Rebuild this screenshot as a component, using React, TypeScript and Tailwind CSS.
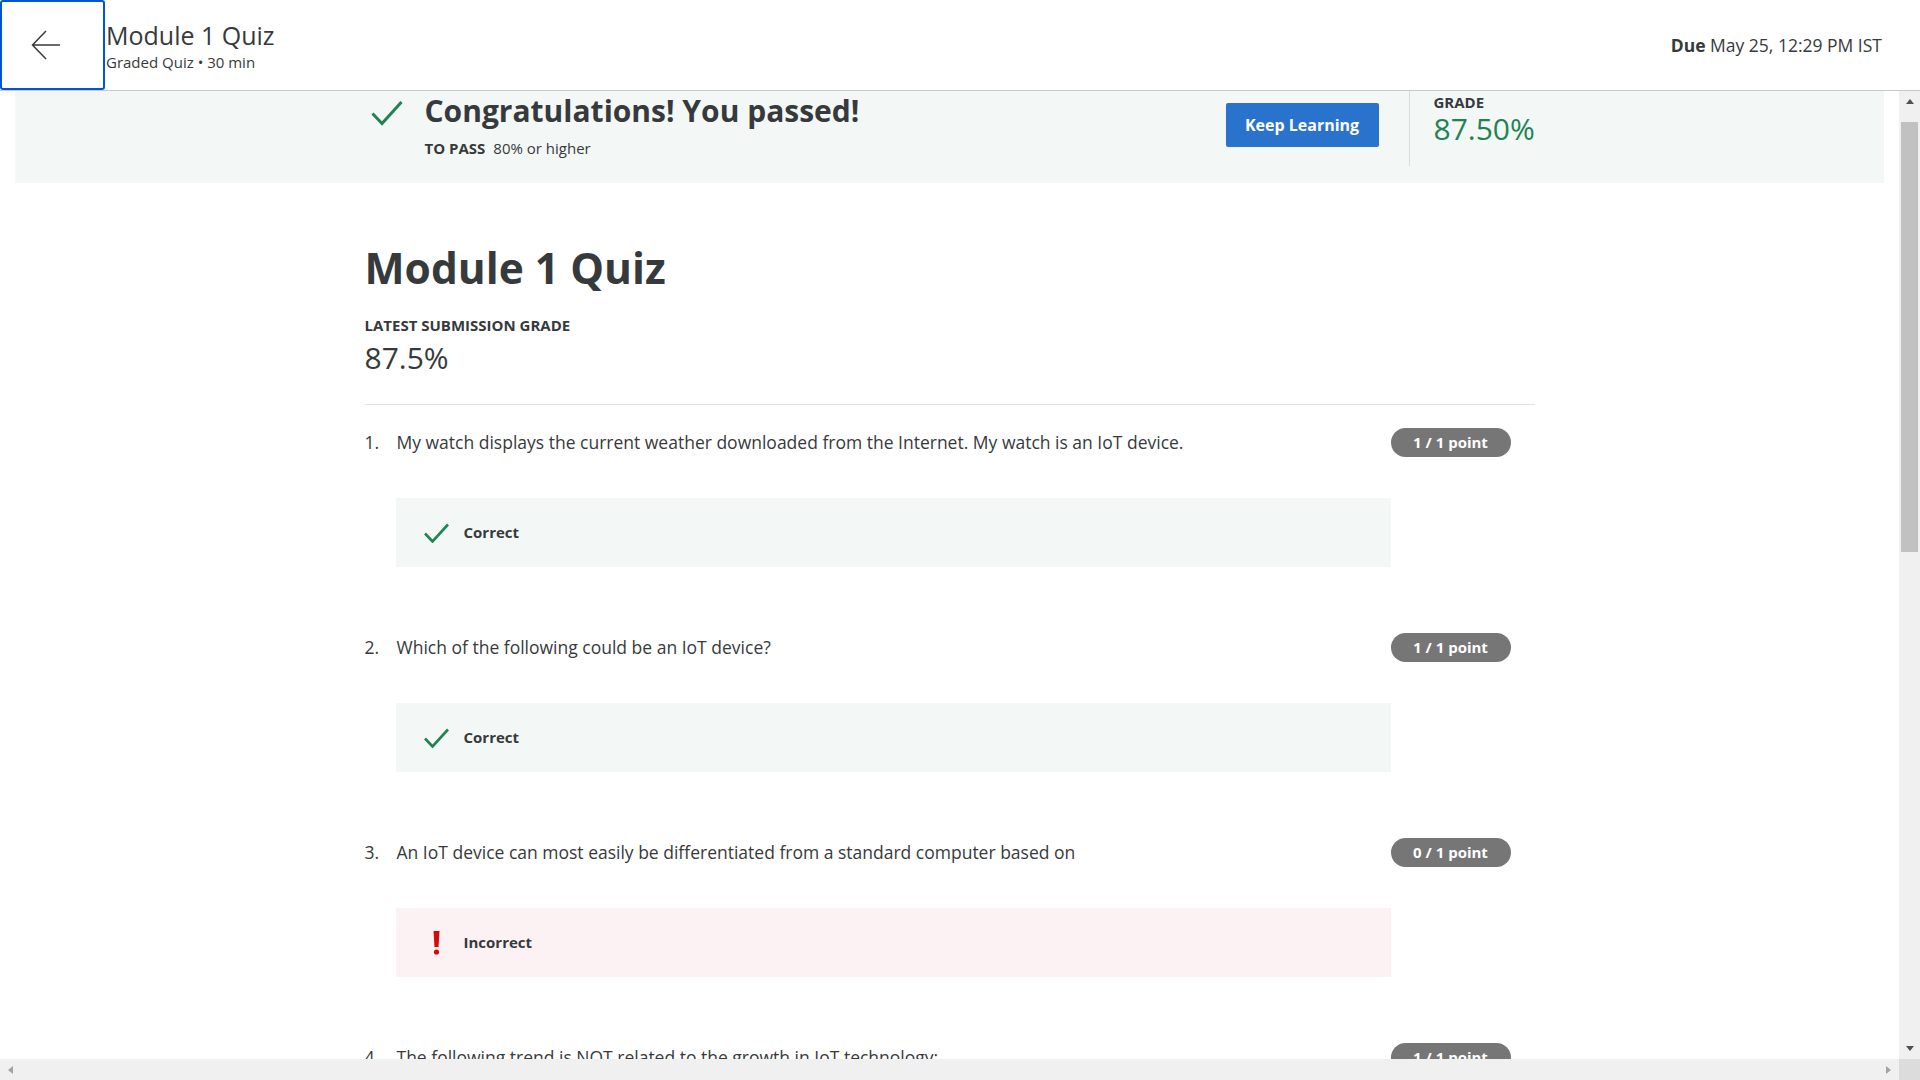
import { type ReactNode } from 'react';

interface Question {
    num: number;
    text: string;
    score: string;
    correct: boolean;
}

const questions: Question[] = [
    { num: 1, text: 'My watch displays the current weather downloaded from the Internet. My watch is an IoT device.', score: '1 / 1 point', correct: true },
    { num: 2, text: 'Which of the following could be an IoT device?', score: '1 / 1 point', correct: true },
    { num: 3, text: 'An IoT device can most easily be differentiated from a standard computer based on', score: '0 / 1 point', correct: false },
    { num: 4, text: 'The following trend is NOT related to the growth in IoT technology:', score: '1 / 1 point', correct: true },
    { num: 5, text: 'Which of the following is an example of an embedded system?', score: '1 / 1 point', correct: true },
    { num: 6, text: 'The interface of an IoT device with the physical world is usually through', score: '1 / 1 point', correct: true },
    { num: 7, text: 'Which of the following is a common constraint of IoT devices?', score: '1 / 1 point', correct: true },
    { num: 8, text: 'A network of IoT devices can be used to', score: '1 / 1 point', correct: true },
];

function CheckIcon({ className }: { className?: string }) {
    return (
        <svg className={className} viewBox="0 0 32 26" fill="none" stroke="#1f8354" strokeWidth={3}>
            <path d="M1.5 13.5L11 23.5L30.5 2" />
        </svg>
    );
}

function ResultBox({ correct }: { correct: boolean }) {
    return (
        <div className={`ml-[31px] mt-[41px] h-[69px] flex items-center pl-[28px] ${correct ? 'bg-[#f3f8f6]' : 'bg-[#fdf2f3]'}`}>
            <div className="w-[25px] flex justify-center">
                {correct ? (
                    <svg className="w-[25px] h-[20px]" viewBox="0 0 25 20" fill="none" stroke="#1f8354" strokeWidth={2.6}>
                        <path d="M1 10.5L8.5 18.5L24 1.5" />
                    </svg>
                ) : (
                    <svg className="w-[7px] h-[24px]" viewBox="0 0 7 24" fill="#d30a0a">
                        <path d="M0.5 0h6l-1 16h-4z" />
                        <circle cx="3.5" cy="21" r="2.6" />
                    </svg>
                )}
            </div>
            <span className="ml-[15px] text-[15px] font-bold text-[#373a3c]">{correct ? 'Correct' : 'Incorrect'}</span>
        </div>
    );
}

function QuestionBlock({ q }: { q: Question }) {
    return (
        <div className="flex mb-[65px]">
            <div className="flex-1 flex flex-col">
                <div className="flex h-[30px] items-center text-[17.5px] text-[#373a3c]">
                    <span className="w-[32px]">{q.num}.</span>
                    <span>{q.text}</span>
                </div>
                <ResultBox correct={q.correct} />
            </div>
            <div className="w-[144px] pt-[1px]">
                <span className="inline-flex items-center justify-center w-[120px] h-[29px] rounded-full bg-[#767676] text-white text-[15px] font-bold">
                    {q.score}
                </span>
            </div>
        </div>
    );
}

function Column({ children }: { children: ReactNode }) {
    return <div className="w-[1170px] mx-auto">{children}</div>;
}

// little triangles for the scrollbar buttons
function Arrow({ dir, color }: { dir: 'up' | 'down' | 'left' | 'right'; color: string }) {
    const d = {
        up: 'M0 5L4 0L8 5Z',
        down: 'M0 0L8 0L4 5Z',
        left: 'M5 0L5 8L0 4Z',
        right: 'M0 0L5 4L0 8Z',
    }[dir];
    const vertical = dir === 'up' || dir === 'down';
    return (
        <svg className={vertical ? 'w-[8px] h-[5px]' : 'w-[5px] h-[8px]'} viewBox={vertical ? '0 0 8 5' : '0 0 5 8'} fill={color}>
            <path d={d} />
        </svg>
    );
}

export default function App() {
    return (
        <div className="h-screen w-screen flex flex-col bg-white font-['Open_Sans',sans-serif] text-[#373a3c]">
            {/* Header */}
            <header className="h-[91px] shrink-0 border-b border-[#c8c8c8] flex items-center">
                <button className="w-[105px] h-[90px] border-2 border-[#0056d2] rounded-[3px] flex items-center pl-[29px]">
                    <svg className="w-[30px] h-[30px]" viewBox="0 0 30 30" fill="none" stroke="#373a3c" strokeWidth={1.5}>
                        <path d="M29 15H1.5M15 1L1.5 15L15 29" />
                    </svg>
                </button>
                <div className="ml-[1px] flex flex-col">
                    <h1 className="text-[25px] leading-[30px]">Module 1 Quiz</h1>
                    <p className="mt-[3px] text-[15px] leading-[18px]">Graded Quiz • 30 min</p>
                </div>
                <div className="ml-auto mr-[38px] text-[17.5px]">
                    <span className="font-bold">Due</span> May 25, 12:29 PM IST
                </div>
            </header>

            <div className="flex-1 min-h-0 grid grid-cols-[1fr_21px] grid-rows-[1fr_21px]">
                <main className="overflow-hidden">
                    {/* Result banner */}
                    <div className="mx-[15px] h-[92px] bg-[#f3f8f6]">
                        <Column>
                            <div className="flex items-start">
                                <div className="flex flex-col">
                                    <div className="flex items-center mt-[2px] h-[36px]">
                                        <CheckIcon className="w-[32px] h-[26px] ml-[6px] mt-[4px]" />
                                        <h2 className="ml-[22px] text-[30px] font-bold leading-[36px]">Congratulations! You passed!</h2>
                                    </div>
                                    <div className="ml-[60px] mt-[9px] text-[15px] leading-[20px]">
                                        <span className="font-bold">TO PASS</span>
                                        <span className="ml-[8px]">80% or higher</span>
                                    </div>
                                </div>
                                <div className="ml-auto flex items-start">
                                    <button className="mt-[12px] w-[153px] h-[44px] rounded-[2px] bg-[#2a73cc] text-white text-[16px] font-bold">
                                        Keep Learning
                                    </button>
                                    <div className="ml-[30px] w-px h-[75px] bg-[#dcdcdc]" />
                                    <div className="w-[125px] pl-[24px] pt-[2px] flex flex-col">
                                        <span className="text-[15px] font-bold leading-[18px]">GRADE</span>
                                        <span className="text-[30px] leading-[36px] text-[#1f8354]">87.50%</span>
                                    </div>
                                </div>
                            </div>
                        </Column>
                    </div>

                    <Column>
                        <section className="pt-[59px]">
                            <h1 className="text-[42.5px] font-bold leading-[52px]">Module 1 Quiz</h1>
                            <p className="mt-[21px] text-[15px] font-bold leading-[20px]">LATEST SUBMISSION GRADE</p>
                            <p className="mt-[5px] text-[30px] leading-[36px]">87.5%</p>
                            <div className="mt-[28px] h-px bg-[#e1e1e1]" />
                        </section>

                        <div className="pt-[22px] pb-[120px]">
                            {questions.map((q) => (
                                <QuestionBlock key={q.num} q={q} />
                            ))}
                        </div>
                    </Column>
                </main>

                {/* Vertical scrollbar */}
                <div className="bg-[#f0f0f0] flex flex-col">
                    <div className="h-[21px] flex items-center justify-center">
                        <Arrow dir="up" color="#505050" />
                    </div>
                    <div className="flex-1 px-[2px] pt-[10px]">
                        <div className="h-[430px] bg-[#c1c1c1]" />
                    </div>
                    <div className="h-[21px] flex items-center justify-center">
                        <Arrow dir="down" color="#505050" />
                    </div>
                </div>

                {/* Horizontal scrollbar */}
                <div className="bg-[#f0f0f0] flex items-center justify-between">
                    <div className="w-[21px] flex justify-center">
                        <Arrow dir="left" color="#a3a3a3" />
                    </div>
                    <div className="w-[21px] flex justify-center">
                        <Arrow dir="right" color="#a3a3a3" />
                    </div>
                </div>
                <div className="bg-[#dcdcdc]" />
            </div>
        </div>
    );
}
